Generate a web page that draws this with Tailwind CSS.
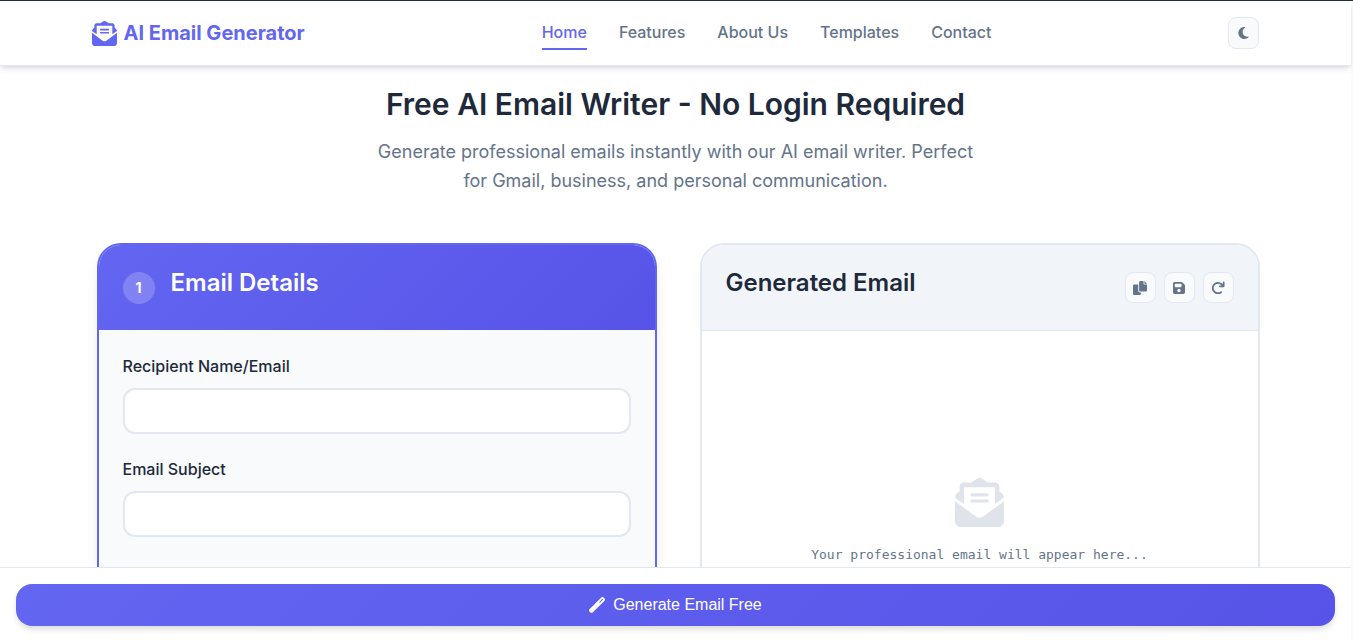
<!DOCTYPE html>
<html lang="en">
<head>
<meta charset="utf-8">
<meta name="viewport" content="width=device-width, initial-scale=1">
<title>AI Email Generator</title>
<script src="https://cdn.jsdelivr.net/npm/@tailwindcss/browser@4"></script>
</head>
<body class="h-screen overflow-hidden border-t border-[#22303a] bg-[#fafafa] pr-0.5 font-['Inter','Open_Sans',sans-serif] text-[#1e293b]">
<svg class="hidden" aria-hidden="true">
  <symbol id="mail" viewBox="0 0 512 512"><path d="M215.4 96H144 107.8 96v8.8V144v40.4 89L.2 202.5c1.6-18.1 10.9-34.9 25.7-45.8L48 140.3V96c0-26.5 21.5-48 48-48h76.6l49.9-36.9C232.2 3.9 243.9 0 256 0s23.8 3.9 33.5 11L339.4 48H416c26.5 0 48 21.5 48 48v44.3l22.1 16.4c14.8 10.9 24.1 27.7 25.7 45.8L416 273.4v-89V144 104.8 96H404.2 368 296.6 215.4zM0 448V242.1L217.6 403.3c11.1 8.2 24.6 12.7 38.4 12.7s27.3-4.4 38.4-12.7L512 242.1V448v0c0 35.3-28.7 64-64 64H64c-35.3 0-64-28.7-64-64v0zM176 160H336c8.8 0 16 7.2 16 16s-7.2 16-16 16H176c-8.8 0-16-7.2-16-16s7.2-16 16-16zm0 64H336c8.8 0 16 7.2 16 16s-7.2 16-16 16H176c-8.8 0-16-7.2-16-16s7.2-16 16-16z"/></symbol>
</svg>
<div class="flex h-full flex-col bg-white">
  <header class="relative z-10 border-b border-slate-200 bg-white shadow-[0_4px_6px_-1px_rgba(0,0,0,0.1),0_2px_4px_-2px_rgba(0,0,0,0.1)]">
    <div class="mx-auto flex h-16 max-w-[1200px] items-center justify-between px-4">
      <a href="#" class="flex items-center gap-[7px] text-xl font-bold text-[#6366f1]">
        <svg class="size-[25px] fill-current"><use href="#mail"/></svg>
        <span>AI Email Generator</span>
      </a>
      <nav class="flex gap-8 text-base leading-6 font-medium text-[#64748b]">
        <a href="#" class="border-b-2 border-[#6366f1] py-1 text-[#6366f1]">Home</a>
        <a href="#" class="py-1">Features</a>
        <a href="#" class="py-1">About Us</a>
        <a href="#" class="py-1">Templates</a>
        <a href="#" class="py-1">Contact</a>
      </nav>
      <button type="button" aria-label="Toggle dark mode" class="flex h-8 w-[31px] items-center justify-center rounded-lg border border-slate-200 bg-slate-50 text-[#64748b]">
        <svg class="h-3 w-[11px] fill-current" viewBox="0 32 384 448"><path d="M223.5 32C100 32 0 132.3 0 256S100 480 223.5 480c60.6 0 115.5-24.2 155.8-63.4c5-4.9 6.3-12.5 3.1-18.7s-10.1-9.7-17-8.5c-9.8 1.7-19.8 2.6-30.1 2.6c-96.9 0-175.5-78.8-175.5-176c0-65.8 36-123.1 89.3-153.3c6.1-3.5 9.2-10.5 7.7-17.3s-7.3-11.9-14.3-12.5c-6.3-.5-12.6-.8-19-.8z"/></svg>
      </button>
    </div>
  </header>

  <main class="flex min-h-0 flex-1 flex-col">
    <section class="mx-auto max-w-[600px] pt-[19px] text-center">
      <h1 class="text-3xl leading-[38px] font-semibold whitespace-nowrap">Free AI Email Writer - No Login Required</h1>
      <p class="mt-[14px] text-lg leading-[29px] text-[#64748b]">Generate professional emails instantly with our AI email writer. Perfect for Gmail, business, and personal communication.</p>
    </section>

    <div class="mx-auto mt-12 grid min-h-0 w-full max-w-[1200px] flex-1 grid-cols-2 gap-[43px] pr-4 pl-[21px]">
      <section class="overflow-hidden rounded-t-3xl border-2 border-b-0 border-[#6366f1] bg-slate-50 shadow-[0_10px_15px_-3px_rgba(0,0,0,0.1)]">
        <div class="flex h-[85px] gap-4 bg-linear-135/srgb from-[#6366f1] to-[#5753e8] px-6 pt-6 text-white">
          <span class="mt-[3px] flex size-8 items-center justify-center rounded-full bg-white/20 text-sm font-bold">1</span>
          <h2 class="text-2xl leading-7 font-semibold">Email Details</h2>
        </div>
        <form class="flex flex-col gap-[23px] px-6 pt-6">
          <div class="flex flex-col gap-2.5">
            <label for="recipient" class="text-base leading-6 font-medium">Recipient Name/Email</label>
            <input id="recipient" type="text" class="h-[46px] rounded-xl border-2 border-slate-200 bg-white px-4">
          </div>
          <div class="flex flex-col gap-2.5">
            <label for="subject" class="text-base leading-6 font-medium">Email Subject</label>
            <input id="subject" type="text" class="h-[46px] rounded-xl border-2 border-slate-200 bg-white px-4">
          </div>
        </form>
      </section>

      <section class="overflow-hidden rounded-t-3xl border-2 border-b-0 border-slate-200 bg-white">
        <div class="flex h-[86px] justify-between border-b border-slate-200 bg-slate-100 px-6 pt-6">
          <h2 class="text-2xl leading-7 font-semibold">Generated Email</h2>
          <div class="mt-[3px] flex gap-2 text-[#64748b]">
            <button type="button" aria-label="Copy" class="flex h-[31px] w-[31px] items-center justify-center rounded-lg border border-slate-200 bg-slate-50"><svg class="size-[14px] fill-current" viewBox="0 0 512 512"><path d="M384 96L384 0h-112c-26.51 0-48 21.49-48 48v288c0 26.51 21.49 48 48 48H464c26.51 0 48-21.49 48-48V128h-95.1C398.4 128 384 113.6 384 96zM416 0v96h96L416 0zM192 352V128h-144c-26.51 0-48 21.49-48 48v288c0 26.51 21.49 48 48 48h192c26.51 0 48-21.49 48-48L288 416h-32C220.7 416 192 387.3 192 352z"/></svg></button>
            <button type="button" aria-label="Save" class="flex h-[31px] w-[31px] items-center justify-center rounded-lg border border-slate-200 bg-slate-50"><svg class="h-[14px] w-[12px] fill-current" viewBox="0 0 448 512"><path d="M64 32C28.7 32 0 60.7 0 96V416c0 35.3 28.7 64 64 64H384c35.3 0 64-28.7 64-64V173.3c0-17-6.7-33.3-18.7-45.3L352 50.7C340 38.7 323.7 32 306.7 32H64zm0 96c0-17.7 14.3-32 32-32H288c17.7 0 32 14.3 32 32v64c0 17.7-14.3 32-32 32H96c-17.7 0-32-14.3-32-32V128zM224 288a64 64 0 1 1 0 128 64 64 0 1 1 0-128z"/></svg></button>
            <button type="button" aria-label="Regenerate" class="flex h-[31px] w-[31px] items-center justify-center rounded-lg border border-slate-200 bg-slate-50"><svg class="size-[14px] fill-current" viewBox="0 0 512 512"><path d="M496 48V192c0 17.69-14.31 32-32 32H320c-17.69 0-32-14.31-32-32s14.31-32 32-32h63.39c-29.97-39.7-77.25-63.78-127.6-63.78C167.7 96.22 96 167.9 96 256s71.69 159.8 159.8 159.8c34.88 0 68.03-11.03 95.88-31.94c14.22-10.53 34.22-7.75 44.81 6.375c10.59 14.16 7.75 34.22-6.375 44.81c-39.03 29.28-85.36 44.86-134.2 44.86C132.5 479.9 32 379.4 32 256s100.5-223.9 223.9-223.9c69.15 0 134 32.47 176.1 86.12V48c0-17.69 14.31-32 32-32S496 30.31 496 48z"/></svg></button>
          </div>
        </div>
        <div class="flex flex-col items-center gap-4 pt-[147px] text-[#64748b]">
          <svg class="size-[49px] fill-[#dfe4ea]"><use href="#mail"/></svg>
          <p class="font-['DejaVu_Sans_Mono',monospace] text-[13px] leading-6">Your professional email will appear here...</p>
        </div>
      </section>
    </div>
  </main>

  <footer class="relative z-10 border-t border-slate-200 bg-white px-4 pt-4 pb-[14px]">
    <button type="button" class="flex h-[42px] w-full items-center justify-center gap-2 rounded-2xl bg-linear-135/srgb from-[#6366f1] to-[#5753e8] font-['Liberation_Sans',Arial,sans-serif] text-base text-white shadow-[0_4px_6px_-1px_rgba(0,0,0,0.15)]">
      <svg class="size-4 fill-current" viewBox="0 0 512 512"><path d="M14.06 463.3C-4.686 444.6 -4.686 414.2 14.06 395.4L395.4 14.06C414.2 -4.686 444.6 -4.686 463.3 14.06L497.9 48.64C516.6 67.38 516.6 97.78 497.9 116.5L116.5 497.9C97.78 516.6 67.38 516.6 48.64 497.9L14.06 463.3zM347.6 187.6L452.6 82.75L429.3 59.31L324.3 164.3L347.6 187.6z"/></svg>
      <span>Generate Email Free</span>
    </button>
  </footer>
</div>
</body>
</html>
